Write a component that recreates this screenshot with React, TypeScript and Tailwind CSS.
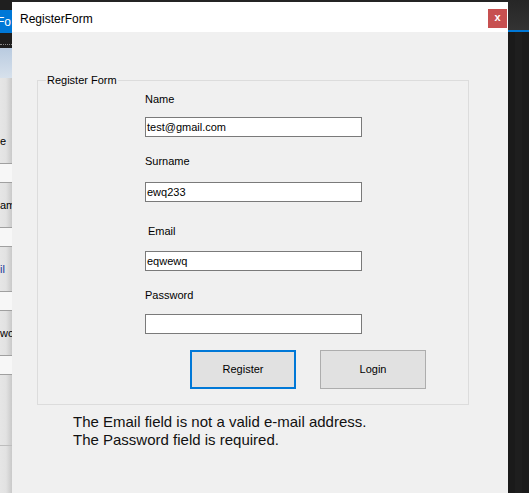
import React from 'react';

const sans = "font-['Liberation_Sans',Arial,sans-serif]";

const TextBox: React.FC<{ value?: string }> = ({ value }) => (
  <div className="w-[217px] h-[20px] bg-white border border-[#7a7a7a] flex items-center px-[1px] text-[11px] text-black leading-none">
    {value}
  </div>
);

// clipped edge of the window behind the dialog
const BackStrip: React.FC = () => {
  const row = (label: string, blue?: boolean) => (
    <>
      <div className="h-[1px] bg-[#a0a0a0]" />
      <div className="h-[18px] bg-[#f7f7f7]" />
      <div className="h-[1px] bg-[#a0a0a0]" />
      <div className="h-[44px] flex items-center overflow-hidden">
        <span className={`text-[11px] whitespace-nowrap ${blue ? 'text-[#1a3a9a]' : 'text-black'}`}>{label}</span>
      </div>
    </>
  );
  return (
    <div className={`w-[12px] shrink-0 flex flex-col overflow-hidden ${sans}`}>
      <div className="h-[10px] bg-[#1f1f1f]" />
      <div className="h-[23px] bg-[#0078d7] flex items-center overflow-hidden">
        <span className="text-[12px] text-white whitespace-nowrap -ml-[3px]">Fo</span>
      </div>
      <div className="h-[15px] bg-[#1e1e1e] flex flex-col justify-end pb-[3px]">
        <div className="h-[1px] border-t border-dotted border-[#8a8a8a]" />
      </div>
      <div className="h-[30px] bg-gradient-to-b from-[#b9cbe0] to-[#d7e1ec]" />
      <div className="flex-1 flex flex-col bg-gradient-to-r from-[#e6e6e6] via-[#e2e2e2] to-[#c9c9c9]">
        <div className="h-[85px] flex items-end pb-[14px] overflow-hidden">
          <span className="text-[11px] text-black whitespace-nowrap">e</span>
        </div>
        {row('ame')}
        {row('il', true)}
        {row('word')}
        <div className="h-[1px] bg-[#a0a0a0]" />
        <div className="h-[18px] bg-[#f7f7f7]" />
        <div className="h-[1px] bg-[#a0a0a0]" />
        <div className="h-[70px]" />
        <div className="h-[1px] bg-[#bdbdbd]" />
      </div>
    </div>
  );
};

export default function App() {
  return (
    <div className={`w-[529px] h-[493px] overflow-hidden flex bg-[#242424] ${sans}`}>
      <BackStrip />

      {/* dialog */}
      <div className="w-[496px] shrink-0 mt-[2px] flex flex-col bg-[#f0f0f0]">
        <div className="h-[30px] bg-white flex items-start justify-between">
          <span className="text-[12px] text-black mt-[8px] ml-[8px]">RegisterForm</span>
          <div className="w-[19px] h-[19px] mt-[7px] mr-[1px] bg-[#c75050] flex items-center justify-center text-white text-[11px] font-bold leading-none pb-[2px]">
            x
          </div>
        </div>

        <div className="flex-1 flex flex-col">
          {/* group box */}
          <div className="relative ml-[25px] mt-[48px] w-[432px] h-[325px] border border-[#dcdcdc] flex flex-col pl-[107px] pt-[12px]">
            <span className="absolute -top-[7px] left-[8px] px-[1px] bg-[#f0f0f0] text-[11px] leading-[13px] text-black">
              Register Form
            </span>
            <span className="text-[11px] leading-[13px] text-black">Name</span>
            <div className="mt-[11px]"><TextBox value="test@gmail.com" /></div>
            <span className="mt-[18px] text-[11px] leading-[13px] text-black">Surname</span>
            <div className="mt-[14px]"><TextBox value="ewq233" /></div>
            <span className="mt-[23px] ml-[3px] text-[11px] leading-[13px] text-black">Email</span>
            <div className="mt-[13px]"><TextBox value="eqwewq" /></div>
            <span className="mt-[18px] text-[11px] leading-[13px] text-black">Password</span>
            <div className="mt-[12px]"><TextBox /></div>
            <div className="mt-[16px] ml-[45px] flex gap-[24px]">
              <div className="w-[106px] h-[39px] bg-[#e1e1e1] border-2 border-[#0078d7] flex items-center justify-center text-[11px] text-black">
                Register
              </div>
              <div className="w-[106px] h-[39px] bg-[#e1e1e1] border border-[#adadad] flex items-center justify-center text-[11px] text-black">
                Login
              </div>
            </div>
          </div>

          <div className="ml-[61px] mt-[8px] flex flex-col text-[15px] leading-[18px] text-[#111]">
            <span>The Email field is not a valid e-mail address.</span>
            <span>The Password field is required.</span>
          </div>
        </div>
      </div>

      {/* right edge: background editor window */}
      <div className="flex-1 flex flex-col">
        <div className="h-[30px] bg-gradient-to-b from-[#262626] to-[#333333]" />
        <div className="h-[2px] bg-[#0078d7]" />
        <div className="flex-1 flex bg-[#1c1c1c]">
          <div className="w-[7px] bg-[#1a1a1a]" />
          <div className="w-[7px] bg-[#1e1e1e]" />
          <div className="flex-1 bg-[#1b1b1b]" />
        </div>
      </div>
    </div>
  );
}
